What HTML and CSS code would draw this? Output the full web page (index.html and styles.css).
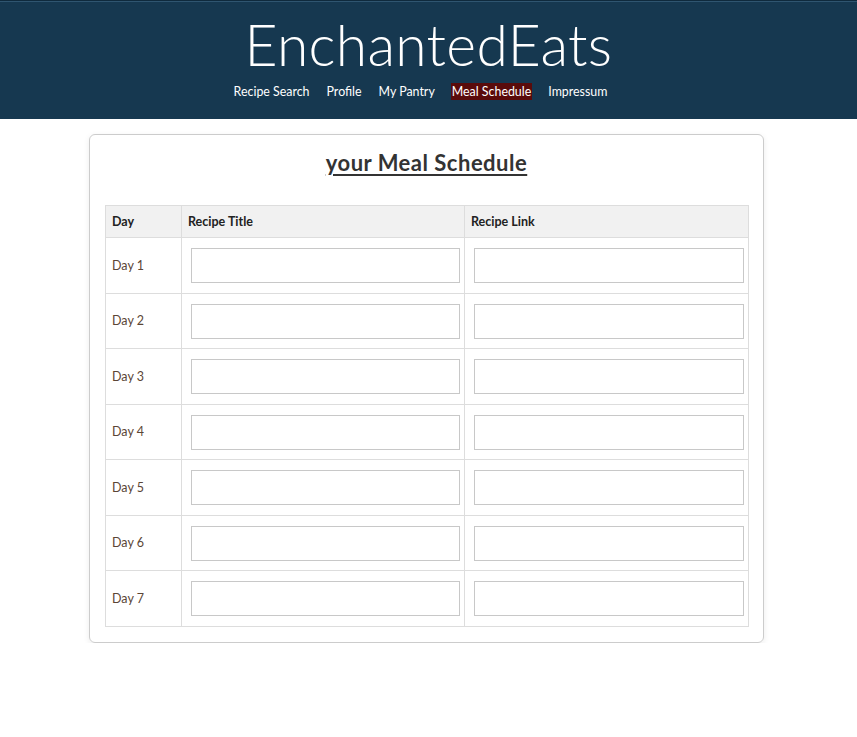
FILE: index.html
```html
<!DOCTYPE html>
<html lang="en">
<head>
<meta charset="utf-8">
<title>EnchantedEats - Meal Schedule</title>
<link rel="stylesheet" href="styles.css">
</head>
<body>
<header class="site-header">
  <h1 class="brand">EnchantedEats</h1>
  <nav class="nav">
    <a href="#" class="nav-link">Recipe Search</a>
    <a href="#" class="nav-link">Profile</a>
    <a href="#" class="nav-link">My Pantry</a>
    <a href="#" class="nav-link active">Meal Schedule</a>
    <a href="#" class="nav-link">Impressum</a>
  </nav>
</header>
<main class="card">
  <h2 class="card-title">your Meal Schedule</h2>
  <table class="schedule">
    <thead>
      <tr><th class="col-day">Day</th><th class="col-title">Recipe Title</th><th class="col-link">Recipe Link</th></tr>
    </thead>
    <tbody>
      <tr><td class="day">Day 1</td><td class="cell"><input type="text" class="field"></td><td class="cell"><input type="text" class="field"></td></tr>
      <tr><td class="day">Day 2</td><td class="cell"><input type="text" class="field"></td><td class="cell"><input type="text" class="field"></td></tr>
      <tr><td class="day">Day 3</td><td class="cell"><input type="text" class="field"></td><td class="cell"><input type="text" class="field"></td></tr>
      <tr><td class="day">Day 4</td><td class="cell"><input type="text" class="field"></td><td class="cell"><input type="text" class="field"></td></tr>
      <tr><td class="day">Day 5</td><td class="cell"><input type="text" class="field"></td><td class="cell"><input type="text" class="field"></td></tr>
      <tr><td class="day">Day 6</td><td class="cell"><input type="text" class="field"></td><td class="cell"><input type="text" class="field"></td></tr>
      <tr><td class="day">Day 7</td><td class="cell"><input type="text" class="field"></td><td class="cell"><input type="text" class="field"></td></tr>
    </tbody>
  </table>
</main>
</body>
</html>
```
FILE: styles.css
```css
* { box-sizing: border-box; }
body {
  margin: 0;
  font-family: "Lato", "Noto Sans", sans-serif;
  color: #333;
  background: #fff;
}
.site-header {
  background: #163850;
  border-top: 1px solid #0f2a3d;
  box-shadow: inset 0 1px 0 #2f5570;
  height: 119px;
  padding-top: 8px;
  text-align: center;
}
.brand {
  margin: 0;
  font-weight: 300;
  font-size: 57px;
  line-height: 70px;
  color: #fff;
  letter-spacing: 0.3px;
}
.nav {
  display: flex;
  justify-content: center;
  gap: 15px;
  margin-top: 4px;
  padding-right: 16px;
}
.nav-link {
  color: #fff;
  text-decoration: none;
  font-size: 12.4px;
  line-height: 17px;
  padding: 0 1px;
}
.nav-link.active {
  background: #5a0b0b;
}
.card {
  width: 675px;
  margin: 15px auto 0;
  position: relative;
  left: -2px;
  border: 1px solid #ccc;
  border-radius: 6px;
  box-shadow: 0 2px 6px rgba(0,0,0,0.08);
  padding: 15px 15px 15px;
}
.card-title {
  margin: 0 0 30px;
  text-align: center;
  font-size: 22px;
  line-height: 25px;
  font-weight: 700;
  letter-spacing: 0.5px;
  text-decoration: underline;
  text-underline-offset: 3px;
  color: #333;
}
.schedule {
  width: 643px;
  border-collapse: collapse;
  table-layout: fixed;
  font-size: 12.5px;
}
.schedule th,
.schedule td {
  border: 1px solid #ddd;
  text-align: left;
}
.schedule th {
  background: #f1f1f1;
  font-weight: 700;
  color: #222;
  height: 32px;
  padding: 0 6px;
}
.col-day { width: 76px; }
.col-title { width: 283px; }
.col-link { width: 284px; }
.day {
  padding: 0 6px;
  color: #5b4636;
  height: 55.5px;
}
.cell {
  padding: 10px 4px 9px 9px;
}
.field {
  display: block;
  width: 100%;
  height: 35px;
  border: 1px solid #c8c8c8;
  border-radius: 0;
  background: #fff;
  font: inherit;
}
```
